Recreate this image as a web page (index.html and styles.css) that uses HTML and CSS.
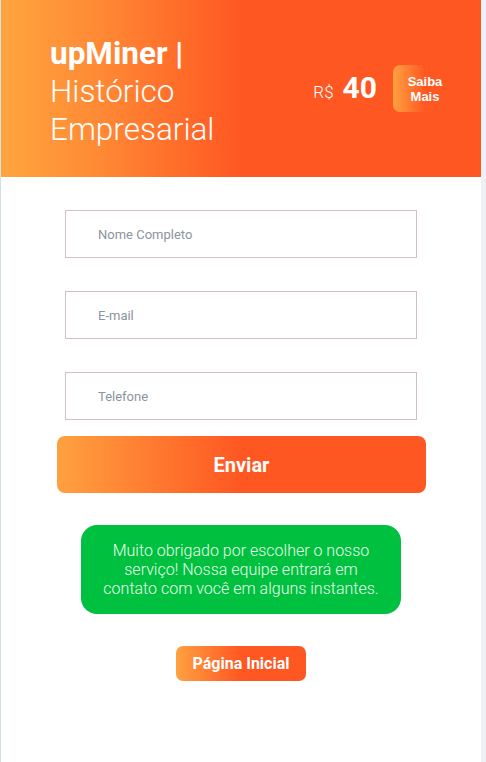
FILE: index.html
```html
<!DOCTYPE html>
<html lang="pt-BR">
<head>
<meta charset="utf-8">
<title>upMiner | Histórico Empresarial</title>
<link rel="stylesheet" href="styles.css">
</head>
<body>
<div class="page">
  <header class="hero">
    <h1 class="title"><strong>upMiner |</strong><br>Histórico<br>Empresarial</h1>
    <div class="offer">
      <div class="price"><span class="cur">R$</span><span class="val">40</span></div>
      <a class="more" href="#">Saiba<br>Mais</a>
    </div>
  </header>
  <main class="content">
    <form class="form">
      <input class="field" type="text" placeholder="Nome Completo">
      <input class="field" type="email" placeholder="E-mail">
      <input class="field" type="tel" placeholder="Telefone">
      <button class="send" type="button">Enviar</button>
    </form>
    <div class="thanks">Muito obrigado por escolher o nosso serviço! Nossa equipe entrará em contato com você em alguns instantes.</div>
    <a class="home" href="#">Página Inicial</a>
  </main>
</div>
</body>
</html>
```
FILE: styles.css
```css
html, body {
  margin: 0;
  padding: 0;
  height: 100%;
}
body {
  background: #eef0f3;
  font-family: Roboto, "Liberation Sans", sans-serif;
}
.page {
  width: 480px;
  min-height: 100%;
  background: #fff;
  border-left: 1px solid #d5dde4;
}
.hero {
  height: 177px;
  box-sizing: border-box;
  padding: 0 0 0 49px;
  display: flex;
  align-items: center;
  justify-content: space-between;
  background: linear-gradient(to right, #ffa53f 0%, #ff8a35 20%, #ff5722 50%, #ff5722 100%);
  color: #fff;
}
.title {
  margin: 0;
  font-size: 31.5px;
  line-height: 38px;
  font-weight: 300;
  padding-top: 6px;
}
.title strong {
  font-weight: 700;
}
.offer {
  display: flex;
  align-items: center;
  margin-right: 24px;
}
.price {
  display: flex;
  align-items: baseline;
  margin-right: 16px;
  margin-top: -2px;
}
.cur {
  font-size: 17px;
  font-weight: 300;
  margin-right: 9px;
}
.val {
  font-size: 30px;
  font-weight: 700;
}
.more {
  width: 64px;
  height: 47px;
  box-sizing: border-box;
  border-radius: 7px;
  display: flex;
  align-items: center;
  justify-content: center;
  text-align: center;
  background: linear-gradient(to right, #ffa140 0%, #ff5722 50%);
  color: #fff;
  text-decoration: none;
  font-family: "Liberation Sans", Arial, sans-serif;
  font-weight: 700;
  font-size: 13px;
  line-height: 15px;
  margin-top: 0;
}
.content {
  display: flex;
  flex-direction: column;
  align-items: center;
  padding-top: 33px;
}
.form {
  display: flex;
  flex-direction: column;
  align-items: center;
  gap: 33px;
}
.field {
  width: 352px;
  height: 48px;
  box-sizing: border-box;
  border: 1px solid #d0c0c6;
  border-radius: 0;
  padding: 0 0 0 32px;
  font-family: Roboto, "Liberation Sans", sans-serif;
  font-size: 13px;
  outline: none;
  background: #fff;
}
.field::placeholder {
  color: #8a959e;
}
.send {
  width: 369px;
  height: 57px;
  margin-top: -17px;
  border: 0;
  border-radius: 8px;
  background: linear-gradient(to right, #ffa140 0%, #ff5722 50%);
  color: #fff;
  font-family: Roboto, "Liberation Sans", sans-serif;
  font-weight: 700;
  font-size: 20px;
  margin-left: 1px;
}
.thanks {
  margin-top: 32px;
  width: 320px;
  height: 89px;
  box-sizing: border-box;
  padding: 16px 16px 0;
  border-radius: 16px;
  background: #00c040;
  color: #e8ffe8;
  font-weight: 300;
  font-size: 16px;
  line-height: 19px;
  text-align: center;
}
.home {
  margin-top: 32px;
  width: 130px;
  height: 35px;
  border-radius: 7px;
  display: flex;
  align-items: center;
  justify-content: center;
  background: linear-gradient(to right, #ffa140 0%, #ff5722 50%);
  color: #fff;
  font-weight: 700;
  font-size: 16px;
  text-decoration: none;
}
```
